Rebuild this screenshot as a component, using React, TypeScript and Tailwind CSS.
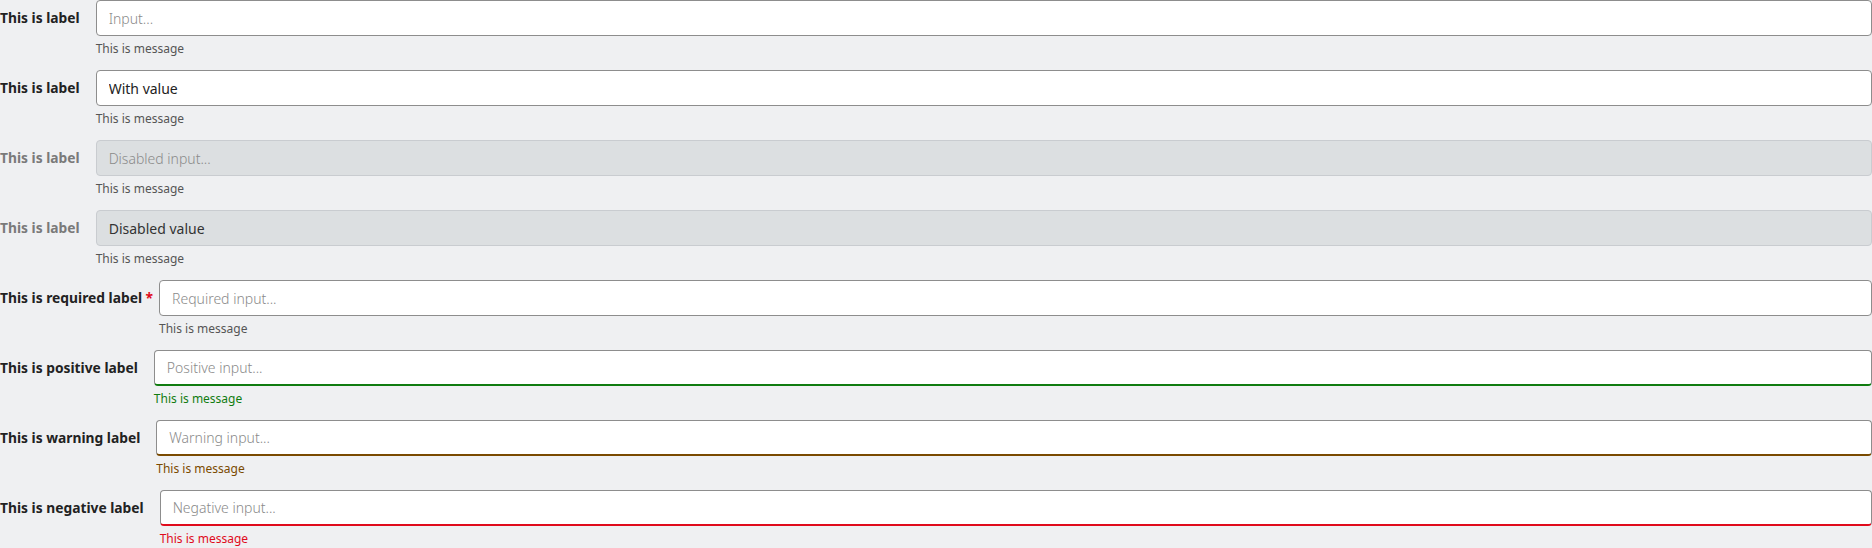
import React from "react";

type Status = "default" | "positive" | "warning" | "negative";

type FieldProps = {
  label: string;
  placeholder?: string;
  value?: string;
  disabled?: boolean;
  required?: boolean;
  status?: Status;
};

const borderByStatus: Record<Status, string> = {
  default: "border-[#8d8d8d]",
  positive: "border-[#8d8d8d] border-b-2 border-b-[#107c10]",
  warning: "border-[#8d8d8d] border-b-2 border-b-[#7a4a00]",
  negative: "border-[#8d8d8d] border-b-2 border-b-[#e00b1c]",
};

const messageByStatus: Record<Status, string> = {
  default: "text-[#555]",
  positive: "text-[#107c10]",
  warning: "text-[#7a4a00]",
  negative: "text-[#e00b1c]",
};

function Field({ label, placeholder, value, disabled, required, status = "default" }: FieldProps) {
  return (
    <div className="flex items-start">
      <label
        className={`relative flex h-9 shrink-0 items-center text-[13.8px] font-bold ${
          disabled ? "text-[#7a7a7a]" : "text-[#222]"
        } ${required ? "pr-[17px]" : "pr-4"}`}
      >
        {label}
        {required && <span className="absolute right-[6px] text-[#e00b1c]">*</span>}
      </label>
      <div className="flex min-w-0 flex-1 flex-col">
        <input
          disabled={disabled}
          defaultValue={value}
          placeholder={placeholder}
          className={`h-9 w-full rounded border px-3 text-[14px] outline-none placeholder:font-light placeholder:text-[#8a8a8a] ${
            disabled
              ? "border-[#c9ccd0] bg-[#dcdfe1] text-[#333]"
              : `bg-white text-[#222] ${borderByStatus[status]}`
          }`}
        />
        <p className={`mt-1 text-[12px] leading-[18px] ${messageByStatus[status]}`}>This is message</p>
      </div>
    </div>
  );
}

export default function App() {
  return (
    <div
      className="flex min-h-[548px] flex-col gap-3 bg-[#eff0f2]"
      style={{ fontFamily: '"Noto Sans", "Open Sans", sans-serif' }}
    >
      <Field label="This is label" placeholder="Input..." />
      <Field label="This is label" value="With value" />
      <Field label="This is label" placeholder="Disabled input..." disabled />
      <Field label="This is label" value="Disabled value" disabled />
      <Field label="This is required label" placeholder="Required input..." required />
      <Field label="This is positive label" placeholder="Positive input..." status="positive" />
      <Field label="This is warning label" placeholder="Warning input..." status="warning" />
      <Field label="This is negative label" placeholder="Negative input..." status="negative" />
    </div>
  );
}
